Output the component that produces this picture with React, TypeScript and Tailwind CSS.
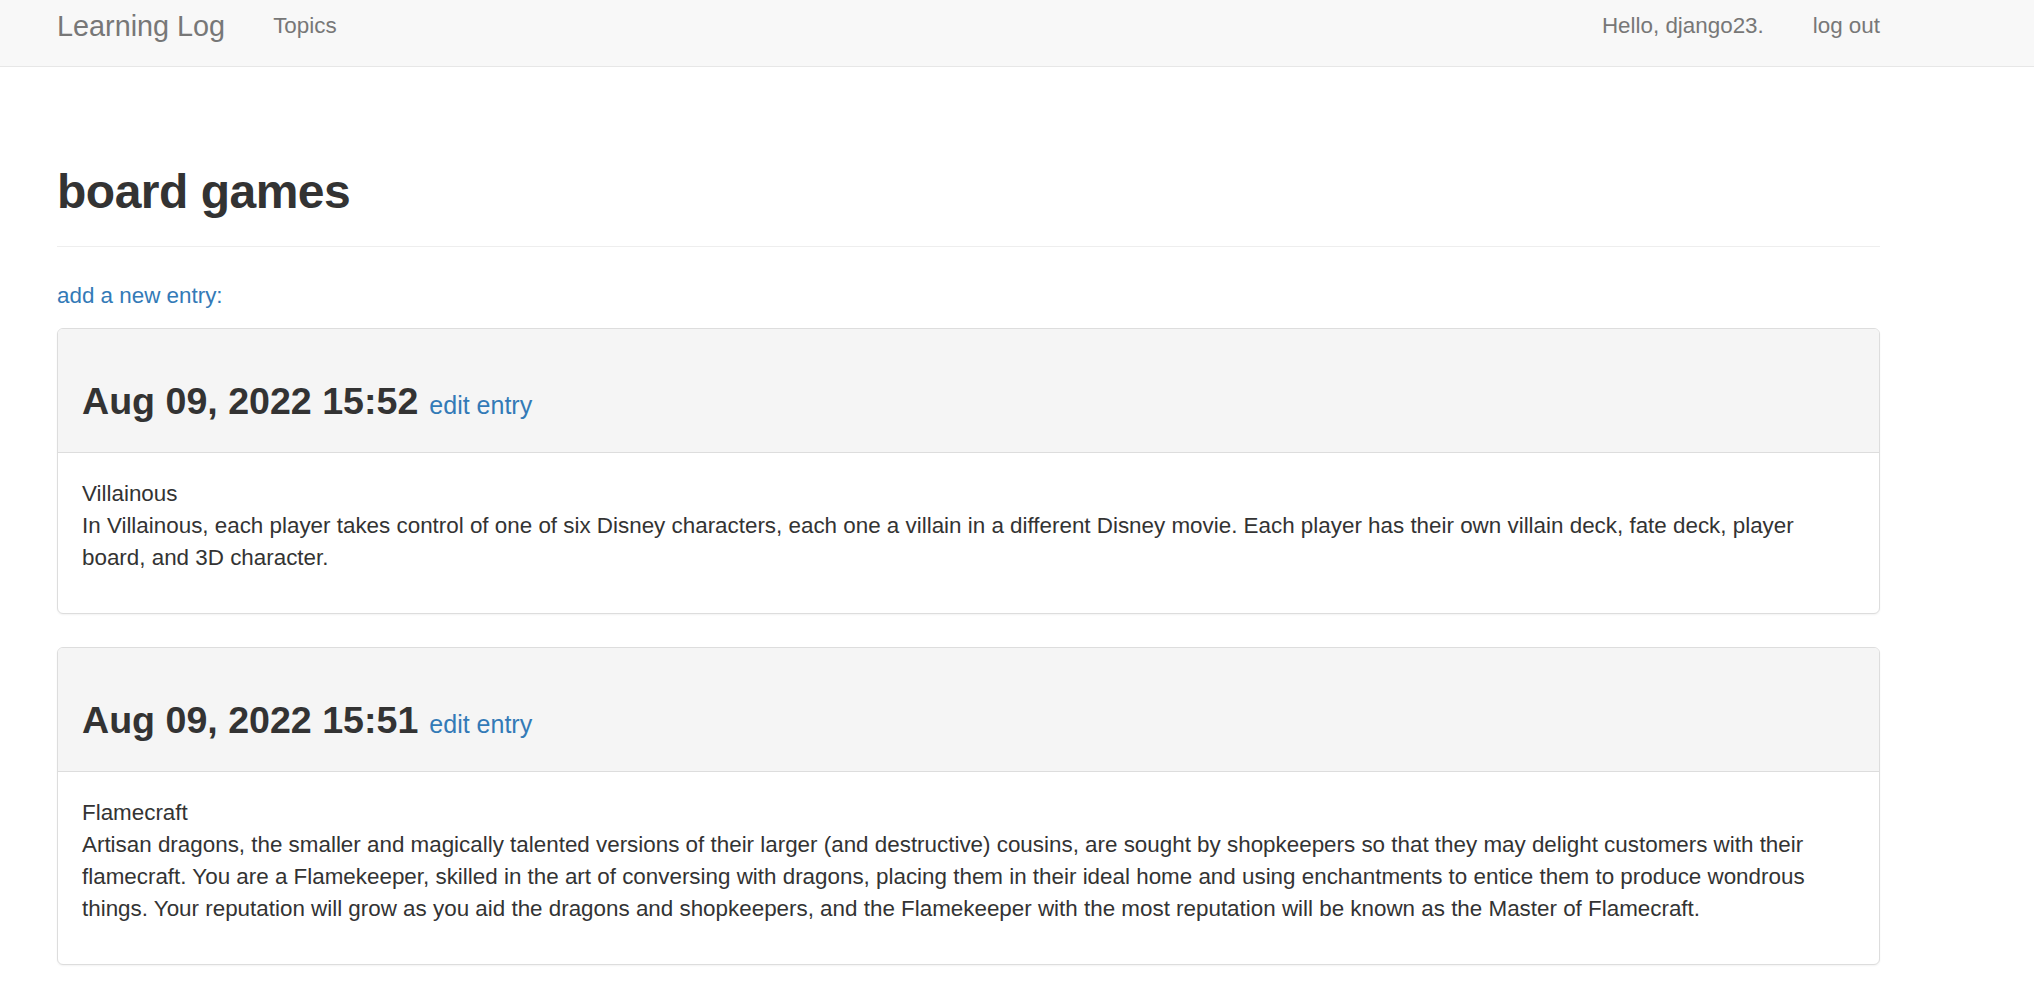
const entries = [
  {
    date: 'Aug 09, 2022 15:52',
    title: 'Villainous',
    text: 'In Villainous, each player takes control of one of six Disney characters, each one a villain in a different Disney movie. Each player has their own villain deck, fate deck, player board, and 3D character.',
  },
  {
    date: 'Aug 09, 2022 15:51',
    title: 'Flamecraft',
    text: 'Artisan dragons, the smaller and magically talented versions of their larger (and destructive) cousins, are sought by shopkeepers so that they may delight customers with their flamecraft. You are a Flamekeeper, skilled in the art of conversing with dragons, placing them in their ideal home and using enchantments to entice them to produce wondrous things. Your reputation will grow as you aid the dragons and shopkeepers, and the Flamekeeper with the most reputation will be known as the Master of Flamecraft.',
  },
]

const EntryPanel = ({ date, title, text }: { date: string; title: string; text: string }) => (
  <div className="mb-[33px] rounded-[6px] border border-[#ddd] bg-white shadow-[0_1px_2px_rgba(0,0,0,0.05)] overflow-hidden">
    {/* heading */}
    <div className="bg-[#f5f5f5] border-b border-[#ddd] px-[24px] pt-[51px] pb-[30px]">
      <h3 className="flex items-baseline gap-[11px] leading-[42px]">
        <span className="text-[37.6px] font-bold text-[#333]">{date}</span>
        <a href="#" className="text-[25px] leading-none text-[#337ab7]">edit entry</a>
      </h3>
    </div>
    {/* body */}
    <div className="px-[24px] pt-[25px] pb-[39px]">
      <p>
        {title}
        <br />
        {text}
      </p>
    </div>
  </div>
)

export default function App() {
  return (
    <div className="min-h-screen bg-white text-[#333] text-[22.4px] leading-[32px] font-['Liberation_Sans',Arial,sans-serif]">
      <nav className="h-[67px] bg-[#f8f8f8] border-b border-[#e7e7e7]">
        <div className="ml-[57px] w-[1823px] pt-[10px] flex items-start justify-between">
          <div className="flex items-start gap-[48px]">
            <a href="#" className="text-[28.8px] leading-[32px] text-[#777]">Learning Log</a>
            <a href="#" className="text-[#777]">Topics</a>
          </div>
          <div className="flex items-start gap-[49px]">
            <span className="text-[#777]">Hello, django23.</span>
            <a href="#" className="text-[#777]">log out</a>
          </div>
        </div>
      </nav>

      <main className="ml-[57px] w-[1823px] pt-[98px]">
        <div className="pb-[28px] border-b border-[#eee]">
          <h1 className="text-[48px] leading-[53px] font-bold tracking-[-0.5px]">board games</h1>
        </div>

        <p className="mt-[33px] mb-[16px]">
          <a href="#" className="text-[#337ab7]">add a new entry:</a>
        </p>

        {entries.map((e) => (
          <EntryPanel key={e.date} {...e} />
        ))}
      </main>
    </div>
  )
}
